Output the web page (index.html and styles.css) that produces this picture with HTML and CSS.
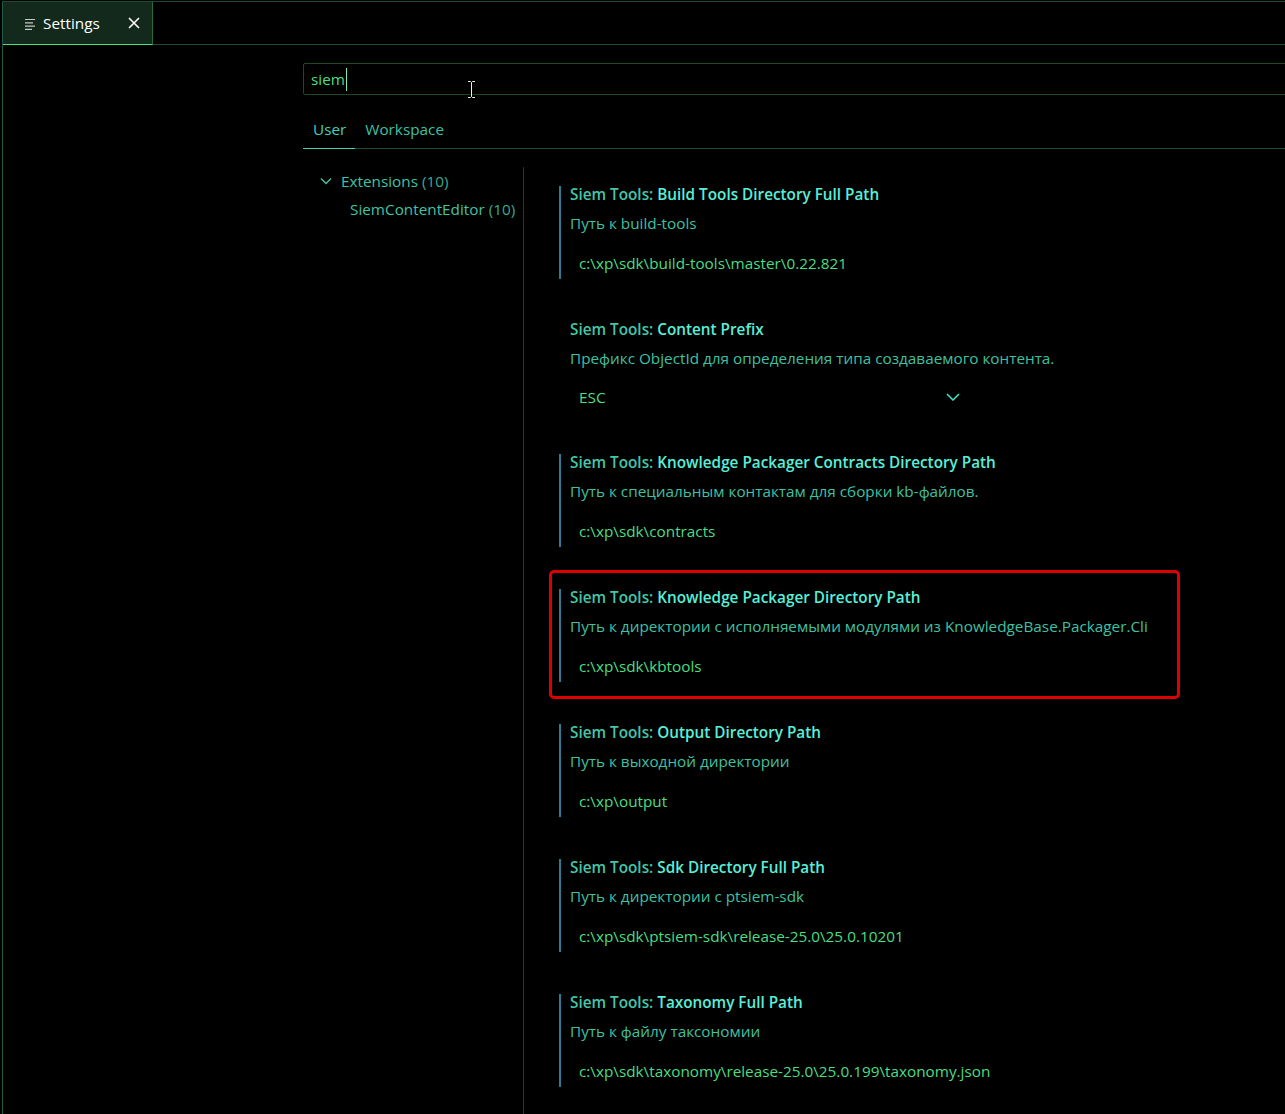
FILE: index.html
```html
<!DOCTYPE html>
<html lang="ru">
<head>
<meta charset="utf-8">
<title>Settings</title>
<link rel="stylesheet" href="styles.css">
</head>
<body>
<div class="window">
  <div class="tabbar">
    <div class="tab">
      <svg class="tab-icon" width="11" height="12" viewBox="0 0 11 12"><path d="M0 1.5H10M0 4.8H8M0 8.1H10M0 11.4H7" stroke="#c8c8c8" stroke-width="1.2" fill="none"/></svg>
      <span class="tab-label">Settings</span>
      <svg class="tab-close" width="12" height="12" viewBox="0 0 12 12"><path d="M1 1L11 11M11 1L1 11" stroke="#ffffff" stroke-width="1.6" fill="none"/></svg>
    </div>
  </div>
  <div class="editor">
    <div class="search"><span class="search-text">siem</span><span class="caret"></span></div>
    <div class="scopes">
      <div class="scope scope-active">User</div>
      <div class="scope">Workspace</div>
    </div>
    <div class="body">
      <nav class="toc">
        <div class="toc-row toc-group">
          <svg class="toc-chevron" width="12" height="8" viewBox="0 0 12 8"><path d="M1 1.5L6 6.5L11 1.5" stroke="#42c2a4" stroke-width="1.4" fill="none"/></svg>
          <span>Extensions <span class="toc-count">(10)</span></span>
        </div>
        <div class="toc-row toc-child"><span>SiemContentEditor <span class="toc-count">(10)</span></span></div>
      </nav>
      <div class="settings">
        <div class="setting modified">
          <div class="setting-title"><span class="cat">Siem Tools: </span><span class="key">Build Tools Directory Full Path</span></div>
          <div class="setting-desc">Путь к build-tools</div>
          <div class="setting-input">c:\xp\sdk\build-tools\master\0.22.821</div>
        </div>
        <div class="setting">
          <div class="setting-title"><span class="cat">Siem Tools: </span><span class="key">Content Prefix</span></div>
          <div class="setting-desc">Префикс ObjectId для определения типа создаваемого контента.</div>
          <div class="setting-select"><span>ESC</span><svg width="14" height="8" viewBox="0 0 14 8"><path d="M1 1L7 7L13 1" stroke="#3fe6cf" stroke-width="1.5" fill="none"/></svg></div>
        </div>
        <div class="setting modified">
          <div class="setting-title"><span class="cat">Siem Tools: </span><span class="key">Knowledge Packager Contracts Directory Path</span></div>
          <div class="setting-desc">Путь к специальным контактам для сборки kb-файлов.</div>
          <div class="setting-input">c:\xp\sdk\contracts</div>
        </div>
        <div class="setting modified highlighted">
          <div class="setting-title"><span class="cat">Siem Tools: </span><span class="key">Knowledge Packager Directory Path</span></div>
          <div class="setting-desc">Путь к директории с исполняемыми модулями из KnowledgeBase.Packager.Cli</div>
          <div class="setting-input">c:\xp\sdk\kbtools</div>
          <div class="red-frame"></div>
        </div>
        <div class="setting modified">
          <div class="setting-title"><span class="cat">Siem Tools: </span><span class="key">Output Directory Path</span></div>
          <div class="setting-desc">Путь к выходной директории</div>
          <div class="setting-input">c:\xp\output</div>
        </div>
        <div class="setting modified">
          <div class="setting-title"><span class="cat">Siem Tools: </span><span class="key">Sdk Directory Full Path</span></div>
          <div class="setting-desc">Путь к директории с ptsiem-sdk</div>
          <div class="setting-input">c:\xp\sdk\ptsiem-sdk\release-25.0\25.0.10201</div>
        </div>
        <div class="setting modified">
          <div class="setting-title"><span class="cat">Siem Tools: </span><span class="key">Taxonomy Full Path</span></div>
          <div class="setting-desc">Путь к файлу таксономии</div>
          <div class="setting-input">c:\xp\sdk\taxonomy\release-25.0\25.0.199\taxonomy.json</div>
        </div>
      </div>
    </div>
  </div>
  <svg class="mouse-cursor" width="9" height="19" viewBox="0 0 9 19"><path d="M1 1.5H3.5L4.5 2.5L5.5 1.5H8M4.5 2.5V16.5M1 17.5H3.5L4.5 16.5L5.5 17.5H8" stroke="#000" stroke-width="2.2" fill="none"/><path d="M1 1.5H3.5L4.5 2.5L5.5 1.5H8M4.5 2.5V16.5M1 17.5H3.5L4.5 16.5L5.5 17.5H8" stroke="#f0f0f0" stroke-width="1" fill="none"/></svg>
</div>
</body>
</html>
```

FILE: styles.css
```css
* { box-sizing: border-box; }

html, body {
  margin: 0;
  padding: 0;
  background: #000;
  overflow: hidden;
}

body {
  font-family: "Open Sans", "Noto Sans", sans-serif;
  font-size: 15.3px;
  color: #42c2a4;
}

.window {
  position: relative;
  margin: 1px 0 0 2px;
  height: 1113px;
  border-top: 1px solid #1d4a3a;
  border-left: 1px solid #1d5a48;
  overflow: hidden;
}

/* ---------- tab bar ---------- */
.tabbar {
  display: flex;
  height: 43px;
  border-bottom: 1px solid #1d4a3a;
}

.tab {
  display: flex;
  align-items: center;
  width: 150px;
  height: 43px;
  margin-bottom: -1px;
  padding-left: 22px;
  background: #12291c;
  border-right: 1px solid #2a6a3c;
  border-bottom: 1px solid #4be07a;
}

.tab-icon { flex: none; margin-top: 1px; }

.tab-label {
  margin-left: 7px;
  color: #ffffff;
  font-size: 15.3px;
}

.tab-close {
  flex: none;
  margin-left: auto;
  margin-right: 12px;
}

/* ---------- editor ---------- */
.editor {
  padding-left: 300px;
}

.search {
  display: flex;
  align-items: center;
  height: 32px;
  margin-top: 18px;
  margin-right: -10px;
  padding-left: 7px;
  border: 1px solid #1e4a22;
  border-radius: 2px;
}

.search-text {
  color: #4ade80;
}

.caret {
  width: 1px;
  height: 23px;
  margin-left: 1px;
  background: #7fe8b0;
}

.scopes {
  display: flex;
  height: 39px;
  margin-top: 15px;
  border-bottom: 1px solid #1d4a3a;
}

.scope {
  display: flex;
  align-items: center;
  padding: 0 9px 0 10px;
  color: #3cc0a2;
}

.scope-active {
  color: #45d0b8;
  border-bottom: 1px solid #45d0b8;
  margin-bottom: -1px;
}

.body {
  display: flex;
  margin-top: 18px;
}

.toc {
  flex: none;
  width: 221px;
  height: 960px;
  border-right: 1px solid #1c3a30;
}

.toc-row {
  display: flex;
  align-items: center;
  height: 28px;
  color: #42c2a4;
  white-space: nowrap;
}

.toc-group { padding-left: 17px; }
.toc-chevron { margin-right: 9px; }
.toc-child { padding-left: 47px; }
.toc-count { color: #3aa98f; }

/* ---------- settings list ---------- */
.settings {
  display: flex;
  flex-direction: column;
  gap: 42px;
  padding: 19px 0 0 35px;
}

.setting {
  position: relative;
  padding: 0 0 3px 9px;
  border-left: 2px solid transparent;
}

.setting.modified { border-left-color: #2c7c98; }

.setting-title {
  height: 18px;
  margin-top: -1px;
  line-height: 18px;
  font-weight: 600;
  white-space: nowrap;
}

.cat { color: #43c6a8; }
.key { color: #58efd8; }

.setting-desc {
  margin-top: 10px;
  height: 20px;
  line-height: 20px;
  color: #3fc0a2;
  white-space: nowrap;
}

.setting-input {
  display: flex;
  align-items: center;
  width: 520px;
  height: 26px;
  margin-top: 17px;
  padding-left: 9px;
  color: #4ade80;
  white-space: nowrap;
}

.setting-select {
  display: flex;
  align-items: center;
  justify-content: space-between;
  width: 400px;
  height: 24px;
  margin-top: 17px;
  padding: 0 10px 0 9px;
  color: #4ade80;
}

.red-frame {
  position: absolute;
  left: -12px;
  top: -19px;
  width: 631px;
  height: 129px;
  border: 3px solid #dc0000;
  border-radius: 5px;
  pointer-events: none;
}

.mouse-cursor {
  position: absolute;
  left: 464px;
  top: 78px;
}
```
